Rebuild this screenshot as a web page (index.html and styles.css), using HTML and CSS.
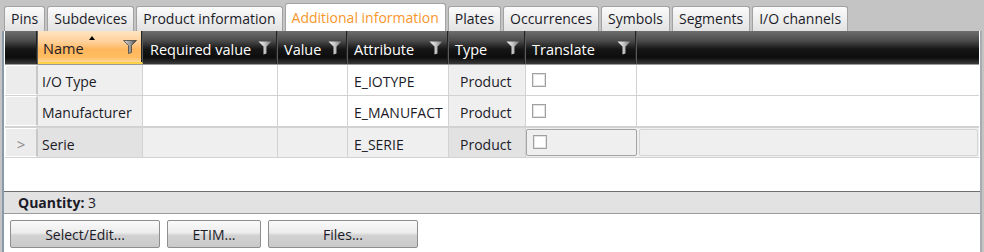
FILE: index.html
```html
<!DOCTYPE html>
<html lang="en">
<head>
    <meta charset="UTF-8">
    <title>Additional information</title>
    <link rel="stylesheet" href="styles.css">
</head>
<body>
    <svg width="0" height="0" class="defs">
        <defs>
            <linearGradient id="silver" x1="0" y1="0" x2="1" y2="0">
                <stop offset="0" stop-color="#f4f4f4"/>
                <stop offset="0.5" stop-color="#c4c4c4"/>
                <stop offset="1" stop-color="#707070"/>
            </linearGradient>
            <linearGradient id="dark" x1="0" y1="0" x2="1" y2="0">
                <stop offset="0" stop-color="#e0e0e0"/>
                <stop offset="0.5" stop-color="#9a9a9a"/>
                <stop offset="1" stop-color="#444"/>
            </linearGradient>
            <symbol id="funnel" viewBox="0 0 14 14">
                <path d="M0.5 0.5 H13.5 L8.5 5.5 V12.5 L5.5 13.5 V5.5 Z"/>
            </symbol>
        </defs>
    </svg>

    <div class="tabs">
        <div class="tab">Pins</div>
        <div class="tab">Subdevices</div>
        <div class="tab">Product information</div>
        <div class="tab active">Additional information</div>
        <div class="tab">Plates</div>
        <div class="tab">Occurrences</div>
        <div class="tab">Symbols</div>
        <div class="tab">Segments</div>
        <div class="tab">I/O channels</div>
    </div>

    <div class="panel">
        <div class="grid">
            <div class="row head">
                <div class="cell c-rh"></div>
                <div class="cell c-name sorted">
                    <span class="label">Name</span>
                    <span class="sort"></span>
                    <svg class="filter" fill="url(#dark)" stroke="#444" stroke-width="0.8"><use href="#funnel"/></svg>
                </div>
                <div class="cell c-req"><span class="label">Required value</span><svg class="filter" fill="url(#silver)"><use href="#funnel"/></svg></div>
                <div class="cell c-val"><span class="label">Value</span><svg class="filter" fill="url(#silver)"><use href="#funnel"/></svg></div>
                <div class="cell c-attr"><span class="label">Attribute</span><svg class="filter" fill="url(#silver)"><use href="#funnel"/></svg></div>
                <div class="cell c-type"><span class="label">Type</span><svg class="filter" fill="url(#silver)"><use href="#funnel"/></svg></div>
                <div class="cell c-tr"><span class="label">Translate</span><svg class="filter" fill="url(#silver)"><use href="#funnel"/></svg></div>
                <div class="cell c-rest"></div>
            </div>

            <div class="row">
                <div class="cell c-rh"></div>
                <div class="cell c-name ro">I/O Type</div>
                <div class="cell c-req"></div>
                <div class="cell c-val"></div>
                <div class="cell c-attr">E_IOTYPE</div>
                <div class="cell c-type ro">Product</div>
                <div class="cell c-tr"><span class="check"></span></div>
                <div class="cell c-rest"></div>
            </div>
            <div class="row">
                <div class="cell c-rh"></div>
                <div class="cell c-name ro">Manufacturer</div>
                <div class="cell c-req"></div>
                <div class="cell c-val"></div>
                <div class="cell c-attr">E_MANUFACT</div>
                <div class="cell c-type ro">Product</div>
                <div class="cell c-tr"><span class="check"></span></div>
                <div class="cell c-rest"></div>
            </div>
            <div class="row current">
                <div class="cell c-rh">&gt;</div>
                <div class="cell c-name ro">Serie</div>
                <div class="cell c-req"></div>
                <div class="cell c-val"></div>
                <div class="cell c-attr">E_SERIE</div>
                <div class="cell c-type ro">Product</div>
                <div class="cell c-tr focus"><span class="check"></span></div>
                <div class="cell c-rest focus"></div>
            </div>
        </div>

        <div class="quantity"><b>Quantity:</b> 3</div>

        <div class="buttons">
            <button class="btn wide">Select/Edit...</button>
            <button class="btn">ETIM...</button>
            <button class="btn wide">Files...</button>
        </div>
    </div>
</body>
</html>
```

FILE: styles.css
```css
body {
  margin: 0;
  background: #c4c4c4;
  font-family: "Open Sans", "Noto Sans", sans-serif;
  font-size: 14px;
  color: #1b1b28;
}
.defs {
  position: absolute;
}

/* tab strip */
.tabs {
  display: flex;
  align-items: flex-end;
  gap: 2px;
  height: 31px;
  padding-left: 4px;
}
.tab {
  height: 24px;
  line-height: 24px;
  padding: 0 6px;
  border: 1px solid #a2a2a2;
  border-bottom: none;
  border-radius: 3px 3px 0 0;
  background: linear-gradient(#fbfbfb, #e2e2e2);
  white-space: nowrap;
}
.tab.active {
  height: 27px;
  line-height: 28px;
  background: #fff;
  color: #f7962b;
  padding: 0 6px;
}

/* panel */
.panel {
  margin: 0 2px;
  height: 221px;
  background: #fff;
  border-left: 2px solid #8b9aaa;
  border-right: 2px solid #a8acb0;
  display: flex;
  flex-direction: column;
}

.grid {
  flex: none;
  height: 160px;
  margin: 0 1px;
}
.row {
  display: flex;
  height: 30px;
  border-bottom: 1px solid #d2d2d2;
}
.cell {
  box-sizing: border-box;
  border-right: 1px solid #d2d2d2;
  padding-left: 4px;
  padding-top: 2px;
  line-height: 30px;
  white-space: nowrap;
  overflow: hidden;
}
.c-rh { width: 33px; }
.c-name { width: 105px; }
.c-req { width: 135px; padding-left: 7px; }
.c-val { width: 70px; padding-left: 6px; }
.c-attr { width: 101px; padding-left: 6px; }
.c-type { width: 77px; padding-left: 11px; }
.c-tr { width: 111px; padding-left: 6px; }
.c-rest { flex: 1; border-right: none; }

.row .c-rh {
  background: #ececec;
  border: 1px solid #fff;
  border-right: 2px solid #c8c8c8;
  color: #8a8a8a;
  text-align: center;
  font-size: 15px;
  line-height: 26px;
  padding-left: 0;
}
.ro {
  background: #efefef;
}

/* header */
.row.head {
  height: 33px;
  border-bottom: 1px solid #9a9a9a;
  background: linear-gradient(#6e6e6e 0%, #4a4a4a 30%, #161616 55%, #0c0c0c 80%, #3a3a3a 100%);
  color: #fff;
}
.head .cell {
  display: flex;
  align-items: center;
  justify-content: space-between;
  padding-top: 0;
  padding-right: 5px;
  border-right: 1px solid #5a5a5a;
  box-shadow: inset -1px 0 0 #222;
}
.head .label {
  padding-top: 5px;
  font-size: 14.5px;
}
.head .c-rh {
  background: none;
  border: none;
  border-right: 1px solid #5a5a5a;
}
.head .c-name {
  padding-left: 5px;
}
.head .c-attr,
.head .c-type,
.head .c-tr {
  padding-left: 6px;
}
.head .c-rest {
  border-right: none;
  box-shadow: none;
}
.head .sorted {
  position: relative;
  background: linear-gradient(#ffe4c2 0%, #ffd09a 35%, #ffb65c 60%, #ffbd62 85%, #ffd79a 100%);
  border-bottom: 2px solid #ffd24a;
  color: #1b1b28;
}
.sort {
  position: absolute;
  left: 51px;
  top: 5px;
  border-left: 3px solid transparent;
  border-right: 3px solid transparent;
  border-bottom: 4px solid #000;
}
.filter {
  width: 14px;
  height: 14px;
  flex: none;
}

/* selected row */
.row.current {
  height: 29px;
  border-top: 1px solid #d2d2d2;
  background: #efefef;
}
.current .ro {
  background: #e2e2e2;
}
.current .focus {
  border: 1px solid #a4a4a4;
  border-radius: 2px;
  margin: 1px 0;
  padding-top: 0;
  line-height: 25px;
  padding-left: 6px;
}
.current .c-rest.focus {
  margin-left: 2px;
  margin-right: 1px;
  border-color: #d4d4d4;
}

.check {
  display: inline-block;
  vertical-align: middle;
  width: 12px;
  height: 12px;
  border: 1px solid #a0a0a0;
  box-shadow: inset 0 0 0 1px #e2e2e2;
  background: #fff;
  margin-top: -7px;
}
.current .check {
  margin-top: -4px;
}

/* footer */
.quantity {
  flex: none;
  height: 21px;
  line-height: 22px;
  padding-left: 14px;
  background: #e2e2e2;
  border-top: 1px solid #6e6e6e;
  border-bottom: 1px solid #9a9a9a;
}
.quantity b {
  font-weight: 700;
}

.buttons {
  display: flex;
  gap: 7px;
  padding: 6px 0 0 6px;
}
.btn {
  width: 94px;
  height: 28px;
  font: inherit;
  color: #1b1b28;
  border: 1px solid #8e8e8e;
  border-radius: 2px;
  background: linear-gradient(#fafafa 0%, #ececec 45%, #d2d2d2 55%, #c9c9c9 100%);
}
.btn.wide {
  width: 150px;
}
```
